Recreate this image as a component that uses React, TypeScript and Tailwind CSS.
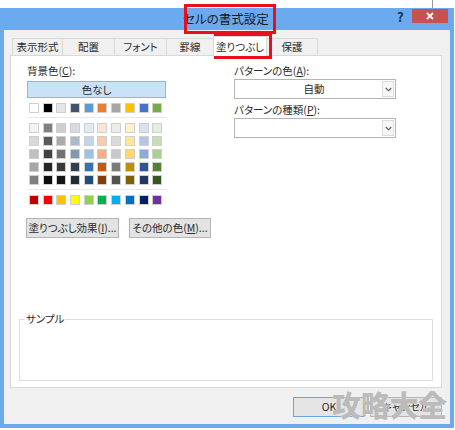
import React from "react";

const themeRow = ["#FFFFFF", "#000000", "#E7E6E6", "#44546A", "#5B9BD5", "#ED7D31", "#A5A5A5", "#FFC000", "#4472C4", "#70AD47"];
const tintRows = [
    ["#F2F2F2", "#7F7F7F", "#D0CECE", "#D6DCE4", "#DDEBF7", "#FCE4D6", "#EDEDED", "#FFF2CC", "#D9E1F2", "#E2EFDA"],
    ["#D9D9D9", "#595959", "#AEAAAA", "#ACB9CA", "#BDD7EE", "#F8CBAD", "#DBDBDB", "#FFE699", "#B4C6E7", "#C6E0B4"],
    ["#BFBFBF", "#404040", "#757171", "#8497B0", "#9BC2E6", "#F4B084", "#C9C9C9", "#FFD966", "#8EA9DB", "#A9D08E"],
    ["#A6A6A6", "#262626", "#3A3838", "#333F4F", "#2F75B5", "#C65911", "#7B7B7B", "#BF8F00", "#305496", "#548235"],
    ["#808080", "#0D0D0D", "#161616", "#222B35", "#1F4E78", "#833C0C", "#525252", "#806000", "#203764", "#375623"],
];
const standardRow = ["#C00000", "#FF0000", "#FFC000", "#FFFF00", "#92D050", "#00B050", "#00B0F0", "#0070C0", "#002060", "#7030A0"];

const tabs = [
    { label: "表示形式", className: "w-[51px]" },
    { label: "配置", className: "w-[53px]" },
    { label: "フォント", className: "w-[53px]" },
    { label: "罫線", className: "w-[48px]" },
    { label: "塗りつぶし", className: "w-[54px]", active: true },
    { label: "保護", className: "w-[52px]" },
];

function SwatchRow({ colors }: { colors: string[] }) {
    return (
        <div className="flex gap-[3.7px] ml-[2px]">
            {colors.map((c, i) => (
                <span key={i} className="block w-[10px] h-[10px] border border-[#cfcfcf]" style={{ backgroundColor: c }} />
            ))}
        </div>
    );
}

function Dropdown({ value }: { value?: string }) {
    return (
        <div className="flex h-[20px] w-[162px] border border-[#b4b4b4] bg-white">
            <div className="flex-1 flex items-center justify-center pl-[12px]">{value}</div>
            <div className="w-[12px] m-px flex items-center justify-center border border-[#dcdcdc] bg-[#f7f7f7]">
                <svg width="7" height="5" viewBox="0 0 7 5">
                    <path d="M0.8 1 L3.5 3.8 L6.2 1" fill="none" stroke="#555" strokeWidth="1.1" />
                </svg>
            </div>
        </div>
    );
}

function Key({ k }: { k: string }) {
    return <span className="underline underline-offset-[1px]">{k}</span>;
}

export default function App() {
    return (
        <div className="relative w-[455px] h-[430px] overflow-hidden bg-white text-[10.5px] text-[#2a2a2a] font-['Noto_Sans_CJK_JP','Noto_Sans',sans-serif] [font-feature-settings:'palt']">
            <div className="absolute left-[432px] top-0 h-[8px] w-px bg-[#9a9a9a]" />

            {/* window */}
            <div className="mt-[8px] w-[454px] h-[420px] bg-[#6caaf0] flex flex-col">
                <div className="relative h-[22px] shrink-0 flex items-center justify-center">
                    <span className="text-[12.5px] text-[#1a1a1a] pr-[2px]">セルの書式設定</span>
                    <span className="absolute left-[397px] top-[1px] text-[13px] font-bold text-[#1b2f4a] leading-[16px]">?</span>
                    <div className="absolute right-[6px] top-[1px] w-[36px] h-[14px] bg-[#c75050] flex items-center justify-center">
                        <svg width="8" height="8" viewBox="0 0 8 8">
                            <path d="M1 1 L7 7 M7 1 L1 7" stroke="#fff" strokeWidth="1.8" />
                        </svg>
                    </div>
                </div>

                <div className="flex-1 mx-[4px] mb-[4px] bg-[#f0f0f0] pt-[6px] pl-[6px] pr-[8px] flex flex-col">
                    {/* tabs */}
                    <div className="flex items-end h-[19px] pl-[2px]">
                        {tabs.map((t) =>
                            t.active ? (
                                <div key={t.label} className={`${t.className} relative z-10 -ml-px -mb-px h-[20px] border border-b-0 border-[#d9d9d9] bg-white flex items-center justify-center`}>
                                    {t.label}
                                </div>
                            ) : (
                                <div key={t.label} className={`${t.className} -ml-px first:ml-0 h-[17px] border border-b-0 border-[#d9d9d9] bg-[#f0f0f0] flex items-center justify-center`}>
                                    {t.label}
                                </div>
                            )
                        )}
                    </div>

                    {/* panel */}
                    <div className="h-[333px] border border-[#d9d9d9] bg-white flex flex-col">
                        <div className="flex pl-[16px] pt-[7px]">
                            <div className="w-[207px] flex flex-col">
                                <div className="h-[15px] leading-[15px]">背景色(<Key k="C" />):</div>
                                <div className="mt-[3px] w-[139px] h-[17px] border border-[#84b8e8] bg-[#c9e2f8] flex items-center justify-center">色なし</div>
                                <div className="mt-[5px]"><SwatchRow colors={themeRow} /></div>
                                <div className="mt-[4px] w-[140px] h-px bg-[#e8e8e8]" />
                                <div className="mt-[5px] flex flex-col gap-[3px]">
                                    {tintRows.map((r, i) => <SwatchRow key={i} colors={r} />)}
                                </div>
                                <div className="mt-[4px] w-[140px] h-px bg-[#e8e8e8]" />
                                <div className="mt-[5px]"><SwatchRow colors={standardRow} /></div>
                                <div className="mt-[13px] flex gap-[10px] ml-[-1px]">
                                    <div className="w-[93px] h-[20px] border border-[#b4b4b4] bg-[#e3e3e3] flex items-center justify-center">塗りつぶし効果(<Key k="I" />)...</div>
                                    <div className="w-[82px] h-[20px] border border-[#b4b4b4] bg-[#e3e3e3] flex items-center justify-center">その他の色(<Key k="M" />)...</div>
                                </div>
                            </div>
                            <div className="flex flex-col">
                                <div className="h-[15px] leading-[15px]">パターンの色(<Key k="A" />):</div>
                                <div className="mt-px"><Dropdown value="自動" /></div>
                                <div className="mt-[3px] h-[15px] leading-[15px]">パターンの種類(<Key k="P" />):</div>
                                <div className="mt-px"><Dropdown /></div>
                            </div>
                        </div>

                        <div className="flex-1" />
                        <div className="relative mx-[8px] mb-[6px] h-[62px] border border-[#dcdcdc]">
                            <span className="absolute left-[5px] -top-[8px] bg-white px-px leading-[14px]">サンプル</span>
                        </div>
                    </div>

                    {/* buttons */}
                    <div className="mt-[9px] flex justify-end gap-[5px]">
                        <div className="w-[72px] h-[20px] border border-[#6aa6dd] bg-[#e5e5e5] flex items-center justify-center">OK</div>
                        <div className="w-[72px] h-[20px] border border-[#b4b4b4] bg-[#e3e3e3] flex items-center justify-center">キャンセル</div>
                    </div>
                </div>
            </div>

            {/* highlight boxes */}
            <div className="absolute left-[184px] top-[4px] w-[92px] h-[30px] border-[3px] border-[#e8101a]" />
            <div className="absolute left-[214px] top-[33px] w-[58px] h-[26px] border-[3px] border-[#e8101a]" />

            {/* watermark */}
            <div className="absolute left-[332px] top-[386px] text-[29px] leading-[36px] font-black tracking-[-0.3px] text-[#b2b2b2]/90 [text-shadow:0_0_1px_#fff] [font-feature-settings:normal]">
                攻略大全
            </div>
        </div>
    );
}
